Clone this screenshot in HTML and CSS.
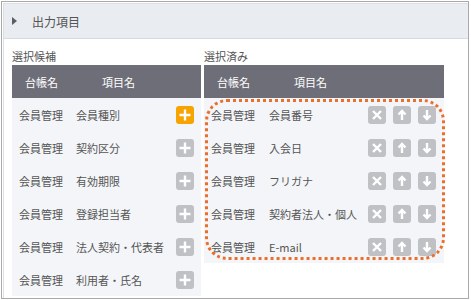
FILE: index.html
```html
<!DOCTYPE html>
<html lang="ja">
<head>
  <meta charset="UTF-8">
  <title>出力項目</title>
  <link rel="stylesheet" href="styles.css">
</head>
<body>
  <div class="frame">
    <div class="panel">
      <!-- 見出し -->
      <div class="panel-head"><span class="caret"></span>出力項目</div>

      <div class="panel-body">
        <!-- 選択候補 -->
        <div class="col col-left">
          <div class="col-label">選択候補</div>
          <div class="table">
            <div class="thead"><span class="h-book">台帳名</span><span>項目名</span></div>
            <div class="tbody">
              <div class="row"><span class="c-book">会員管理</span><span class="c-item">会員種別</span>
                <span class="btn btn-add active"><svg viewBox="0 0 18 18"><path d="M9 3.5v11M3.5 9h11"/></svg></span></div>
              <div class="row"><span class="c-book">会員管理</span><span class="c-item">契約区分</span>
                <span class="btn btn-add"><svg viewBox="0 0 18 18"><path d="M9 3.5v11M3.5 9h11"/></svg></span></div>
              <div class="row"><span class="c-book">会員管理</span><span class="c-item">有効期限</span>
                <span class="btn btn-add"><svg viewBox="0 0 18 18"><path d="M9 3.5v11M3.5 9h11"/></svg></span></div>
              <div class="row"><span class="c-book">会員管理</span><span class="c-item">登録担当者</span>
                <span class="btn btn-add"><svg viewBox="0 0 18 18"><path d="M9 3.5v11M3.5 9h11"/></svg></span></div>
              <div class="row"><span class="c-book">会員管理</span><span class="c-item">法人契約・代表者</span>
                <span class="btn btn-add"><svg viewBox="0 0 18 18"><path d="M9 3.5v11M3.5 9h11"/></svg></span></div>
              <div class="row"><span class="c-book">会員管理</span><span class="c-item">利用者・氏名</span>
                <span class="btn btn-add"><svg viewBox="0 0 18 18"><path d="M9 3.5v11M3.5 9h11"/></svg></span></div>
            </div>
          </div>
        </div>

        <!-- 選択済み -->
        <div class="col col-right">
          <div class="col-label">選択済み</div>
          <div class="table">
            <div class="thead"><span class="h-book">台帳名</span><span>項目名</span></div>
            <div class="tbody selected">
              <div class="row"><span class="c-book">会員管理</span><span class="c-item">会員番号</span>
                <span class="tools">
                  <span class="btn"><svg viewBox="0 0 18 18"><path d="M5 5l8 8M13 5l-8 8"/></svg></span>
                  <span class="btn"><svg viewBox="0 0 18 18"><path d="M9 14V5M5.5 8.5L9 5l3.5 3.5"/></svg></span>
                  <span class="btn"><svg viewBox="0 0 18 18"><path d="M9 4v9M5.5 9.5L9 13l3.5-3.5"/></svg></span>
                </span></div>
              <div class="row"><span class="c-book">会員管理</span><span class="c-item">入会日</span>
                <span class="tools">
                  <span class="btn"><svg viewBox="0 0 18 18"><path d="M5 5l8 8M13 5l-8 8"/></svg></span>
                  <span class="btn"><svg viewBox="0 0 18 18"><path d="M9 14V5M5.5 8.5L9 5l3.5 3.5"/></svg></span>
                  <span class="btn"><svg viewBox="0 0 18 18"><path d="M9 4v9M5.5 9.5L9 13l3.5-3.5"/></svg></span>
                </span></div>
              <div class="row"><span class="c-book">会員管理</span><span class="c-item">フリガナ</span>
                <span class="tools">
                  <span class="btn"><svg viewBox="0 0 18 18"><path d="M5 5l8 8M13 5l-8 8"/></svg></span>
                  <span class="btn"><svg viewBox="0 0 18 18"><path d="M9 14V5M5.5 8.5L9 5l3.5 3.5"/></svg></span>
                  <span class="btn"><svg viewBox="0 0 18 18"><path d="M9 4v9M5.5 9.5L9 13l3.5-3.5"/></svg></span>
                </span></div>
              <div class="row"><span class="c-book">会員管理</span><span class="c-item">契約者法人・個人</span>
                <span class="tools">
                  <span class="btn"><svg viewBox="0 0 18 18"><path d="M5 5l8 8M13 5l-8 8"/></svg></span>
                  <span class="btn"><svg viewBox="0 0 18 18"><path d="M9 14V5M5.5 8.5L9 5l3.5 3.5"/></svg></span>
                  <span class="btn"><svg viewBox="0 0 18 18"><path d="M9 4v9M5.5 9.5L9 13l3.5-3.5"/></svg></span>
                </span></div>
              <div class="row"><span class="c-book">会員管理</span><span class="c-item">E-mail</span>
                <span class="tools">
                  <span class="btn"><svg viewBox="0 0 18 18"><path d="M5 5l8 8M13 5l-8 8"/></svg></span>
                  <span class="btn"><svg viewBox="0 0 18 18"><path d="M9 14V5M5.5 8.5L9 5l3.5 3.5"/></svg></span>
                  <span class="btn"><svg viewBox="0 0 18 18"><path d="M9 4v9M5.5 9.5L9 13l3.5-3.5"/></svg></span>
                </span></div>
            </div>
          </div>
        </div>
      </div>
    </div>
  </div>
</body>
</html>
```

FILE: styles.css
```css
body {
  margin: 0;
  padding: 1px 0 0 1px;
  font-family: "Noto Sans CJK JP", "Noto Sans", sans-serif;
  color: #555;
  background: #fff;
}

.frame {
  box-sizing: border-box;
  width: 468px;
  height: 298px;
  border: 1px solid #a9a9a9;
  padding: 1px 0 0 1px;
  overflow: hidden;
}

.panel {
  height: 100%;
  border-left: 1px solid #dcdfe3;
  border-top: 1px solid #dcdfe3;
}

.panel-head {
  display: flex;
  align-items: center;
  height: 34px;
  background: #e9ecf0;
  border-bottom: 1px solid #d6d9de;
  font-size: 12px;
  color: #555;
}

.caret {
  width: 0;
  height: 0;
  margin: 0 15px 0 8px;
  border-top: 4px solid transparent;
  border-bottom: 4px solid transparent;
  border-left: 5px solid #5a5f66;
}

.panel-body {
  display: flex;
  gap: 3px;
  padding: 8px 0 0 8px;
}

.col-left { width: 189px; }
.col-right { width: 240px; }

.col-label {
  height: 18px;
  line-height: 18px;
  font-size: 11px;
  color: #555;
}

.thead {
  display: flex;
  align-items: center;
  height: 33px;
  padding-left: 13px;
  background: #6e6e78;
  color: #fff;
  font-size: 11px;
}

.h-book { width: 77px; }

.tbody {
  background: #f4f5f9;
}

.row {
  display: flex;
  align-items: center;
  height: 33px;
  padding: 0 7px;
  font-size: 11px;
  color: #555;
}

.col-right .row { padding-right: 8px; }
.col-right .c-book { width: 58px; }

.c-book { width: 57px; }
.c-item { flex: 1; }

.tools {
  display: flex;
  gap: 7px;
}

.btn {
  display: flex;
  width: 18px;
  height: 18px;
  border-radius: 3px;
  background: #bfc1c5;
}

.btn.active { background: #f7a300; }

.btn svg {
  width: 18px;
  height: 18px;
  fill: none;
  stroke: #fff;
  stroke-width: 2.4;
}

.selected {
  position: relative;
}

/* 選択中の枠 */
.selected::after {
  content: "";
  position: absolute;
  top: 1px;
  left: 1px;
  right: -1px;
  bottom: 3px;
  border: 3px dotted #e9702c;
  border-radius: 22px;
  pointer-events: none;
}
```
